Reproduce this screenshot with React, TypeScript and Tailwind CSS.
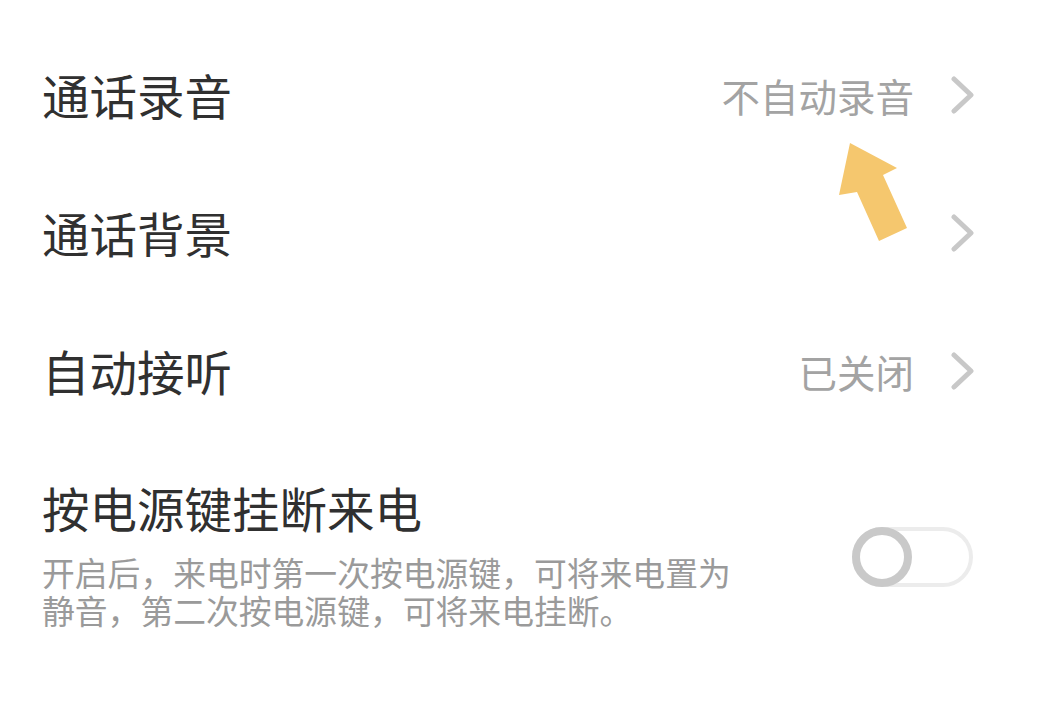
import React from "react";

const Chevron = () => (
  <svg width="26" height="38" viewBox="0 0 26 38" className="shrink-0">
    <polyline points="4,3 21,19 4,35" fill="none" stroke="#c8c8c8" strokeWidth="5" strokeLinecap="round" strokeLinejoin="round" />
  </svg>
);

const Row = ({ title, value, chevron = true }: { title: string; value?: string; chevron?: boolean }) => (
  <div className="flex h-[138px] items-center justify-between pl-[42px] pr-[77px]">
    <span className="text-[47.5px] leading-none text-[#303030]">{title}</span>
    <div className="flex items-center gap-[36px]">
      {value && <span className="text-[38.5px] leading-none text-[#a3a3a3]">{value}</span>}
      {chevron && <Chevron />}
    </div>
  </div>
);

export default function App() {
  return (
    <div
      className="relative h-[702px] w-[1053px] overflow-hidden bg-white"
      style={{ fontFamily: '"Noto Sans CJK SC", "Noto Sans", sans-serif' }}
    >
      <div className="flex flex-col pt-[26px]">
        <Row title="通话录音" value="不自动录音" />
        <Row title="通话背景" />
        <Row title="自动接听" value="已关闭" />
        <div className="flex items-center justify-between pl-[42px] pr-[80px] pt-[44px]">
          <div className="flex flex-col">
            <span className="text-[47.5px] leading-[48px] text-[#303030]">按电源键挂断来电</span>
            <p className="mt-[21px] w-[720px] text-[32.8px] leading-[38px] text-[#9a9a9a]">
              开启后，来电时第一次按电源键，可将来电置为静音，第二次按电源键，可将来电挂断。
            </p>
          </div>
          <div className="relative h-[60px] w-[121px] rounded-full border-[4px] border-[#ececec]">
            <div className="absolute left-[-4px] top-[-4px] h-[60px] w-[60px] rounded-full border-[8px] border-[#c9c9c9] bg-white" />
          </div>
        </div>
      </div>
      <svg className="pointer-events-none absolute left-0 top-0" width="1053" height="702">
        <polygon
          points="850,143 897,168 883,175 907,228 879,241 857,192 839,195"
          fill="#f5c76e"
        />
      </svg>
    </div>
  );
}
